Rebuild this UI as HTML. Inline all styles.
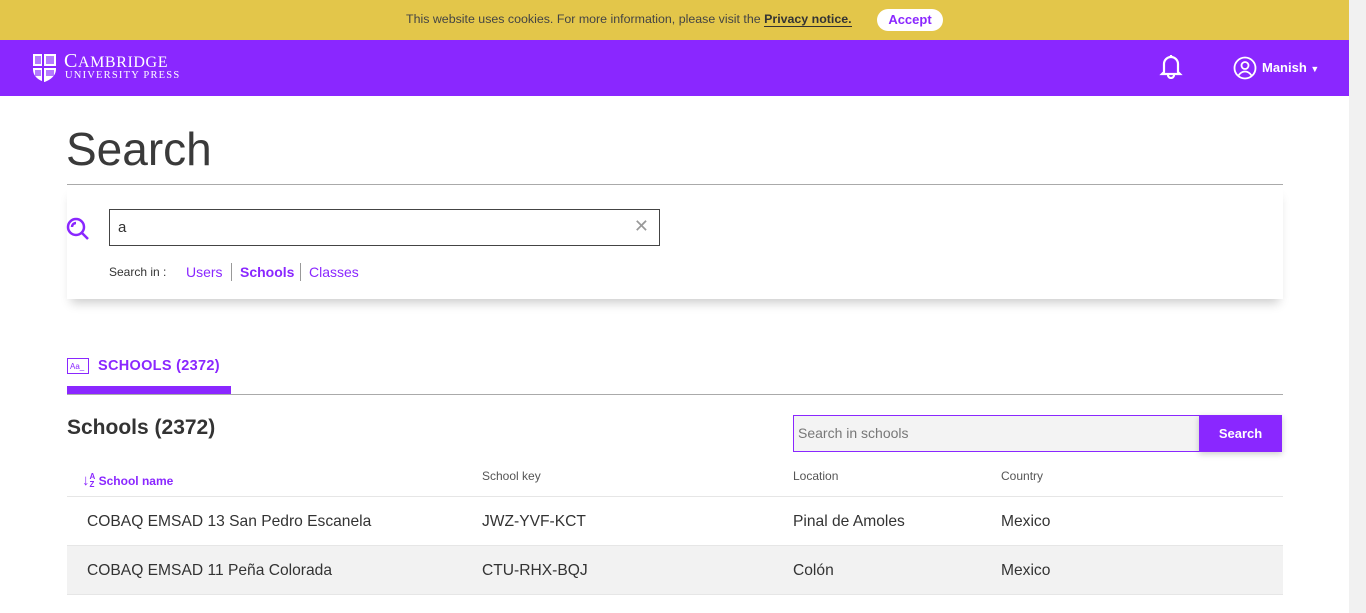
<!DOCTYPE html>
<html><head><meta charset="utf-8"><style>
*{box-sizing:border-box;margin:0;padding:0}
body{width:1366px;height:613px;overflow:hidden;background:#fff;font-family:"Liberation Sans",sans-serif;color:#333;position:relative}
.abs{position:absolute}
.cookie{left:0;top:0;width:1349px;height:40px;background:#e3c64a;font-size:12.4px;color:#444}
.nav{left:0;top:40px;width:1349px;height:56px;background:#8a27ff}
.sb{left:1349px;top:0;width:17px;height:613px;background:#f1f1f1}
.th{font-size:12px;color:#555;top:469px}
.row{left:67px;width:1216px;height:49px;border-bottom:1px solid #e6e6e6;font-size:15.6px;color:#333}
.row span{position:absolute;top:16px}
</style></head><body>
<div class="abs cookie">
 <div class="abs" style="left:406px;top:12px">This website uses cookies. For more information, please visit the <b style="color:#333;border-bottom:1px solid #333">Privacy notice.</b></div>
 <div class="abs" style="left:877px;top:9px;width:66px;height:22px;background:#fff;border-radius:11px;color:#8a27ff;font-weight:bold;font-size:13px;text-align:center;line-height:22px">Accept</div>
</div>
<div class="abs nav">
 <svg class="abs" style="left:32px;top:13px" width="25" height="30" viewBox="0 0 25 30"><path d="M1 1h23v15c0 7-6 11-11.5 13C6 27 1 23 1 16z" fill="#fff"/><path d="M11 1v28M1 14h23" stroke="#8a27ff" stroke-width="2"/><rect x="3" y="3" width="6" height="8" fill="#b57aff"/><rect x="14" y="3" width="8" height="8" fill="#b57aff"/><rect x="3" y="17" width="6" height="6" fill="#b57aff"/><rect x="14" y="17" width="8" height="6" fill="#b57aff"/></svg>
 <div class="abs" style="left:64px;top:10px;color:#fff;font-family:'Liberation Serif',serif;font-size:20px;letter-spacing:0.6px">C<span style="font-size:16px">AMBRIDGE</span></div>
 <div class="abs" style="left:65px;top:30px;color:#fff;font-family:'Liberation Serif',serif;font-size:10.5px;letter-spacing:1.2px">UNIVERSITY PRESS</div>
 <svg class="abs" style="left:1158px;top:13px" width="26" height="26" viewBox="0 0 26 26" fill="none" stroke="#fff" stroke-width="2.2"><path d="M6 19V11a7 7 0 0 1 14 0v8l2 2H4z"/><path d="M13 2v2M10 22a3 3 0 0 0 6 0"/></svg>
 <svg class="abs" style="left:1233px;top:16px" width="24" height="24" viewBox="0 0 24 24" fill="none" stroke="#fff" stroke-width="1.8"><circle cx="12" cy="12" r="10.5"/><circle cx="12" cy="9.5" r="3.5"/><path d="M5.5 19.5c2-3 4-4 6.5-4s4.5 1 6.5 4"/></svg>
 <div class="abs" style="left:1262px;top:20px;color:#fff;font-weight:bold;font-size:13px">Manish <span style="font-size:9px">&#9660;</span></div>
</div>
<div class="abs sb"></div>
<div class="abs" style="left:66px;top:122px;font-size:46px;color:#3a3a3a">Search</div>
<div class="abs" style="left:67px;top:184px;width:1216px;height:1px;background:#aaa"></div>
<div class="abs" style="left:67px;top:185px;width:1216px;height:114px;box-shadow:0 8px 10px -4px rgba(0,0,0,0.2)"></div>
<svg class="abs" style="left:66px;top:217px" width="24" height="24" viewBox="0 0 24 24" fill="none" stroke="#8a27ff" stroke-width="2.5"><circle cx="10" cy="10" r="8"/><path d="M16 16l6 6M6 10a4 4 0 0 1 4-4"/></svg>
<div class="abs" style="left:109px;top:209px;width:551px;height:37px;border:1px solid #444;font-size:15px;padding:9px 8px">a<span style="position:absolute;right:10px;top:6px;color:#999;font-size:18px">✕</span></div>
<div class="abs" style="left:109px;top:265px;font-size:12px;color:#333">Search in :</div>
<div class="abs" style="left:186px;top:264px;font-size:14px;color:#8a27ff">Users</div>
<div class="abs" style="left:231px;top:263px;width:1px;height:18px;background:#999"></div>
<div class="abs" style="left:240px;top:264px;font-size:14px;color:#8a27ff;font-weight:bold">Schools</div>
<div class="abs" style="left:300px;top:263px;width:1px;height:18px;background:#999"></div>
<div class="abs" style="left:309px;top:264px;font-size:14px;color:#8a27ff">Classes</div>
<div class="abs" style="left:67px;top:358px;width:22px;height:16px;border:1.5px solid #8a27ff;font-size:8px;color:#8a27ff;padding:3px 2px">Aa_</div>
<div class="abs" style="left:98px;top:358px;font-size:14.5px;color:#8a27ff;font-weight:bold;letter-spacing:0.3px">SCHOOLS (2372)</div>
<div class="abs" style="left:67px;top:394px;width:1216px;height:1px;background:#aaa"></div>
<div class="abs" style="left:67px;top:386px;width:164px;height:8px;background:#8a27ff"></div>
<div class="abs" style="left:67px;top:416px;font-size:21px;font-weight:bold;color:#333">Schools (2372)</div>
<div class="abs" style="left:793px;top:415px;width:407px;height:37px;border:1px solid #8a27ff;border-right:none;background:#f3f3f3;font-size:14px;color:#777;padding:9px 4px">Search in schools</div>
<div class="abs" style="left:1199px;top:415px;width:83px;height:37px;background:#8a27ff;color:#fff;font-weight:bold;font-size:13px;text-align:center;line-height:37px;box-shadow:0 2px 6px rgba(0,0,0,0.2)">Search</div>
<div class="abs" style="left:82px;top:472px;font-size:12px;color:#8a27ff;font-weight:bold"><span style="font-size:15px">↓</span><span style="font-size:8px;display:inline-block;line-height:8px;vertical-align:-2px">A<br>Z</span> School name</div>
<div class="abs th" style="left:482px">School key</div>
<div class="abs th" style="left:793px">Location</div>
<div class="abs th" style="left:1001px">Country</div>
<div class="abs" style="left:67px;top:496px;width:1216px;height:1px;background:#e6e6e6"></div>
<div class="abs row" style="top:497px"><span style="left:20px">COBAQ EMSAD 13 San Pedro Escanela</span><span style="left:415px">JWZ-YVF-KCT</span><span style="left:726px">Pinal de Amoles</span><span style="left:934px">Mexico</span></div>
<div class="abs row" style="top:546px;background:#f2f2f2"><span style="left:20px">COBAQ EMSAD 11 Peña Colorada</span><span style="left:415px">CTU-RHX-BQJ</span><span style="left:726px">Colón</span><span style="left:934px">Mexico</span></div>
</body></html>
